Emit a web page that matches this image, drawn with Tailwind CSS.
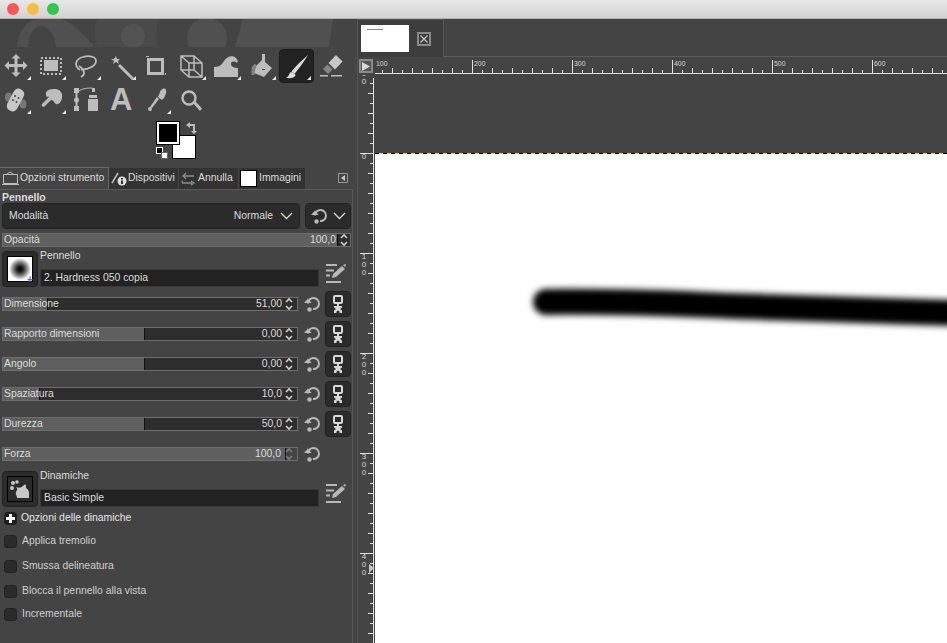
<!DOCTYPE html>
<html><head><meta charset="utf-8"><script src="https://cdn.jsdelivr.net/npm/@tailwindcss/browser@4"></script></head>
<body class="m-0 w-[947px] h-[643px] overflow-hidden bg-[#444444] font-['Liberation_Sans',sans-serif] text-[10.4px] text-[#dcdcdc]">
<svg class="hidden"><defs>
<g id="reset"><path d="M4 8.500a5.500 5.500 0 1 1 5 5.500" fill="none" stroke="#b8b8b8" stroke-width="2"/><path d="M0 8h7.500L4 3.500z" fill="#b8b8b8"/><circle cx="5.500" cy="14.500" r="2.200" fill="#b8b8b8"/></g>
<g id="link"><rect x="3" y="1" width="8" height="7" rx="1" fill="none" stroke="#d8d8d8" stroke-width="2"/><path d="M6 8h2v3H6zM3 11h8v1.500L9 14l2 1.500V18H8.500v-1.500L7 15.500l-1.500 1V18H3v-2.500L5 14l-2-1.500z" fill="#d8d8d8"/></g>
<g id="edit"><path d="M0 0h11v2H0zM0 5.500h8v2H0zM0 10.500h4v2H0zM0 17h15v2H0zM6 14l1-4L16 2l3 3-9 8z" fill="#b8b8b8"/><path d="M17 1l2-1 1 1-1 2z" fill="#b8b8b8"/></g>
<g id="spin"><path d="M2 5l3-3 3 3M2 9l3 3 3-3" fill="none" stroke="#d0d0d0" stroke-width="1.600"/></g>
</defs></svg>

<header class="h-[19px] flex items-center gap-[8px] pl-[7px] bg-gradient-to-b from-[#e8e8e8] to-[#d2d2d2] border-b border-[#b0b0b0]">
  <span class="w-3 h-3 rounded-full bg-[#fc5753]"></span><span class="w-3 h-3 rounded-full bg-[#fdbc40]"></span><span class="w-3 h-3 rounded-full bg-[#33c748]"></span>
</header>

<div class="flex h-[624px]">
  <aside class="w-[353px] shrink-0 flex flex-col relative">
    <svg class="h-[28px] w-[353px] block" viewBox="0 19 353 28"><path d="M17 47C18 31 28 19 38 19H62C75 25 86 37 93 45V47H56C55 37 50 26 41 26 33 26 28 37 28 47Z" fill="#505050"/><path d="M97 19H158C156 28 156 38 158 47H97C94 38 94 28 97 19Z" fill="#4a4a4a"/><circle cx="133" cy="36" r="12" fill="#525252"/><circle cx="207" cy="38" r="20" fill="#505050"/><path d="M243 19H333L329 47H235Z" fill="#505050"/></svg>

    <div class="h-[69px] relative">
      <div class="absolute left-[279px] top-[2px] w-[35px] h-[34px] rounded-[4px] bg-[#222222] border border-[#1a1a1a]"></div>
      <svg class="absolute left-0 top-0" width="353" height="69" viewBox="0 47 353 69" fill="#bdbdbd">
        <path d="M16 54l4.500 4.500h-3v5.500h5.500v-3l4.500 4.500-4.500 4.500v-3h-5.500v5.500h3l-4.500 4.500-4.500-4.500h3v-5.500H9v3l-4.500-4.500 4.500-4.500v3h5.500v-5.500h-3z"/>
        <path d="M44 60h14v11H44z"/><path d="M41 58h20v16H41z" fill="none" stroke="#bdbdbd" stroke-width="2" stroke-dasharray="2 2"/>
        <path d="M80 70C74 66 75 59 83 57 90 55 96 57 96 61 96 66 88 70 81 69.500M79 66c3 2 5 5 5 7 0 2-1 3-3 4" fill="none" stroke="#bdbdbd" stroke-width="1.800"/>
        <path d="M120 64l14 14-2 2-14-14z"/><path d="M116 56l1 3 3 0-2 2 1 3-3-2-3 2 1-3-3-2h3z"/>
        <path d="M147 58h17v17h-17zM150 61v11h11V61z" fill-rule="evenodd"/><path d="M146 56h3v1h-3zM165 73h1v2h-1z"/>
        <path d="M181 56h13l8 7v14h-13l-8-7zM181 56l8 7v14M189 63h13M181 70h13V56M194 70l8 7" fill="none" stroke="#bdbdbd" stroke-width="1.500"/>
        <path d="M214 77V67c6 0 8-3 10-6 3-5 9-6 12-3 2 2 2 4 1 5-2-2-6-2-6 1 0 3 4 4 7 4v9z"/>
        <path d="M256 66l6-6v10h3V62l7 6-8 9-10-4z"/><path d="M262 54h3v15h-3z"/><path d="M253 75v-5c0-3 1-4 3-5" fill="none" stroke="#858585" stroke-width="3"/>
        <path d="M308 55C302 60 296 66 291.500 71.500L294.500 74C299 68 304 62 308 55zM290 72.500C292 71.500 295 73 295.500 75 295 78 290 78.500 286 78 288 77 289 75 290 72.500z" fill="#dcdcdc"/>
        <path d="M336 55l6.500 6.500-7.500 8-6.500-6.500z" fill="#c8c8c8"/><path d="M327.500 64.500l5 5-4.500 4.500-5-5z" fill="#858585"/><path d="M320 75h8v1.500h-8zM331 75h11v1.500h-11z"/>
        <ellipse cx="8.500" cy="97" rx="3.500" ry="4.500" fill="#777"/><ellipse cx="23" cy="104" rx="3.500" ry="4.500" fill="#777"/>
        <rect x="10" y="88" width="11" height="24" rx="5" transform="rotate(28 15.500 100)" fill="#c8c8c8"/><g fill="#444"><circle cx="15" cy="96" r="1"/><circle cx="18.500" cy="98" r="1"/><circle cx="13" cy="100" r="1"/><circle cx="16.500" cy="102" r="1"/></g>
        <path d="M46 95C45 90 50 89 55 89 60 89 63 93 62 98 61 102 59 105 56 104 54 103 54 100 51 100L45 106C43 108 41 106 42 104L49 97C48 96 46 98 46 95z"/>
        <path d="M74 88h5v5h-5zM74 106h5v5h-5zM75.500 93h2v13h-2zM92 88h3v4h-3zM89 95h8v3h-8zM88 99h10v12H88z"/><circle cx="76.500" cy="100" r="2.500"/><path d="M79 91c3-2 6-3 13-3" fill="none" stroke="#bdbdbd" stroke-width="1"/>
        <path d="M160 92c1-3 5-5 6-2 1 2-1 6-2 8l-2 2-4-3z"/><path d="M157 97l2 2-7 9-2-1z"/><circle cx="150" cy="109" r="2"/>
        <circle cx="189" cy="98" r="6.500" fill="none" stroke="#bdbdbd" stroke-width="2.400"/><path d="M193 103l2-2 7 7.500-2 2.500z"/>
        <g fill="#e8e8e8"><path d="M31 80v-4l-4 4zM66 80v-4l-4 4zM101 80v-4l-4 4zM136 80v-4l-4 4zM206 80v-4l-4 4zM241 80v-4l-4 4zM276 80v-4l-4 4zM311 80v-4l-4 4zM31 114v-4l-4 4zM66 114v-4l-4 4zM171 114v-4l-4 4z"/></g>
      </svg>
      <span class="absolute left-[110px] top-[38px] font-bold text-[31px] leading-[30px] text-[#bdbdbd]">A</span>
    </div>

    <div class="h-[51px] relative">
      <div class="absolute left-[172px] top-[19px] w-[24px] h-[24px] bg-white border border-black"></div>
      <div class="absolute left-[156px] top-[5px] w-[24px] h-[24px] bg-black border border-black p-0"><div class="w-full h-full border-2 border-white bg-black"></div></div>
      <svg class="absolute left-[185px] top-[5px]" width="12" height="13" viewBox="0 0 12 13"><path d="M1 4l4-3v2h5v7h2l-3 3-3-3h2V5H5v2z" fill="#bdbdbd"/></svg>
      <div class="absolute left-[156px] top-[31px] w-[7px] h-[7px] bg-black border border-white"></div>
      <div class="absolute left-[161px] top-[36px] w-[7px] h-[7px] bg-white border border-[#666]"></div>
    </div>

    <nav class="h-[22px] flex items-end relative whitespace-nowrap">
      <div class="w-[109px] h-[22px] bg-[#444444] border-t border-r border-[#666] flex items-center gap-[1px] pl-[2px]"><svg class="shrink-0" width="17" height="16" viewBox="0 0 17 16"><path d="M1.500 3.500h14v9h-14zM0 13.500h17M5 3l3-2 3 2" fill="none" stroke="#bdbdbd"/></svg><span class="-mt-[2px]">Opzioni strumento</span></div>
      <div class="w-[69px] h-[21px] bg-[#333333] flex items-center gap-[1px] pl-[2px]"><svg class="shrink-0" width="16" height="16" viewBox="0 0 16 16"><path d="M1 12L7 2" stroke="#bdbdbd" stroke-width="1.500"/><circle cx="11" cy="10" r="4.500" fill="#e0e0e0"/><path d="M10 7h2v1.500h-2zM10 9.500h2V13h-2z" fill="#333"/></svg><span class="-mt-[2px]">Dispositivi</span></div>
      <div class="w-[59px] h-[21px] bg-[#333333] ml-px flex items-center gap-[2px] pl-[1px]"><svg class="shrink-0" width="16" height="16" viewBox="0 0 16 16"><path d="M14 5H4M6 2L3 5l3 3M2 12h10M2 9.500c0 1 0 2 1 2.500M11 14l3-2-3-2" fill="none" stroke="#8f8f8f" stroke-width="1.300"/></svg><span class="-mt-[2px]">Annulla</span></div>
      <div class="w-[66px] h-[21px] bg-[#333333] ml-px flex items-center gap-[2px] pl-[1px]"><div class="w-[17px] h-[17px] bg-white border border-black shrink-0"></div><span class="-mt-[2px]">Immagini</span></div>
      <svg class="absolute left-[338px] top-[6px]" width="10" height="10" viewBox="0 0 10 10"><path d="M.5.500h9v9h-9z" fill="none" stroke="#999"/><path d="M7 2v6L3 5z" fill="#c8c8c8"/></svg>
    </nav>

    <section class="flex-1 border-t border-r border-[#5a5a5a] w-[353px] relative pl-[2px] pr-[1px]">
      <h2 class="font-bold h-[13px] leading-[14px] text-[10.5px]">Pennello</h2>
      <div class="flex gap-[5px] h-[26px]">
        <div class="w-[298px] rounded-[4px] bg-[#2b2b2b] border border-[#222] flex items-center pl-[6px] pr-[6px]"><span class="flex-1 -mt-[1px]">Modalità</span><span class="-mt-[1px]">Normale</span><svg class="ml-[7px]" width="13" height="8" viewBox="0 0 13 8"><path d="M1 1l5.500 5.500L12 1" fill="none" stroke="#d8d8d8" stroke-width="1.300"/></svg></div>
        <div class="w-[46px] rounded-[4px] bg-[#2b2b2b] border border-[#222] flex items-center justify-center gap-[5px]"><svg width="17" height="17" viewBox="0 1 17 17"><use href="#reset"/></svg><svg width="13" height="8" viewBox="0 0 13 8"><path d="M1 1l5.500 5.500L12 1" fill="none" stroke="#d8d8d8" stroke-width="1.300"/></svg></div>
      </div>
      <div class="mt-[4px] w-[349px] h-[14px] border border-[#6e6e6e] bg-[#5f5f5f] flex items-center pl-[1px] leading-none"><span class="flex-1">Opacità</span><span class="pr-[1px]">100,0</span><span class="w-[13px] h-full bg-[#2e2e2e] border-l border-black flex items-center justify-center"><svg width="10" height="14" viewBox="0 0 10 14"><use href="#spin"/></svg></span></div>

      <div class="mt-[4px] flex h-[37px]">
        <div class="w-[36px] h-[36px] rounded-[4px] bg-[#2b2b2b] border border-[#222] flex items-center justify-center shrink-0 relative">
          <div class="w-[26px] h-[26px] border border-black bg-white bg-[radial-gradient(circle_at_center,#000_0,#222_3px,#888_7px,#fff_11px)]"></div>
          <span class="absolute left-[24px] top-[23px] text-[#5566ee] text-[10px] leading-none font-bold">+</span>
        </div>
        <div class="ml-[2px] w-[279px]">
          <p class="h-[15px] leading-[10px]">Pennello</p>
          <div class="h-[18px] mt-[3px] bg-[#222222] border border-[#383838] flex items-center pl-[3px]">2. Hardness 050 copia</div>
        </div>
        <svg class="ml-[7px] mt-[13px]" width="21" height="20" viewBox="0 0 21 20"><use href="#edit"/></svg>
      </div>

      <div class="mt-[3px] flex flex-col">
        <div class="flex items-center h-[26px]"><div class="w-[296px] h-[14px] border border-[#6e6e6e] bg-[linear-gradient(to_right,#5f5f5f_44px,#111_44px,#111_45px,#2d2d2d_45px)] flex items-center pl-[1px] leading-none"><span class="flex-1">Dimensione</span><span class="pr-[2px]">51,00</span><svg width="10" height="14" viewBox="0 0 10 14"><use href="#spin"/></svg><span class="w-[3px]"></span></div><svg class="ml-[6px]" width="17" height="17" viewBox="0 1 17 17"><use href="#reset"/></svg><div class="ml-[4px] w-[26px] h-[26px] rounded-[4px] bg-[#2b2b2b] border border-[#222] flex items-center justify-center"><svg width="14" height="19" viewBox="0 0 14 19"><use href="#link"/></svg></div></div>
        <div class="flex items-center h-[26px] mt-[4px]"><div class="w-[296px] h-[14px] border border-[#6e6e6e] bg-[linear-gradient(to_right,#5f5f5f_141px,#111_141px,#111_142px,#2d2d2d_142px)] flex items-center pl-[1px] leading-none"><span class="flex-1">Rapporto dimensioni</span><span class="pr-[2px]">0,00</span><svg width="10" height="14" viewBox="0 0 10 14"><use href="#spin"/></svg><span class="w-[3px]"></span></div><svg class="ml-[6px]" width="17" height="17" viewBox="0 1 17 17"><use href="#reset"/></svg><div class="ml-[4px] w-[26px] h-[26px] rounded-[4px] bg-[#2b2b2b] border border-[#222] flex items-center justify-center"><svg width="14" height="19" viewBox="0 0 14 19"><use href="#link"/></svg></div></div>
        <div class="flex items-center h-[26px] mt-[4px]"><div class="w-[296px] h-[14px] border border-[#6e6e6e] bg-[linear-gradient(to_right,#5f5f5f_141px,#111_141px,#111_142px,#2d2d2d_142px)] flex items-center pl-[1px] leading-none"><span class="flex-1">Angolo</span><span class="pr-[2px]">0,00</span><svg width="10" height="14" viewBox="0 0 10 14"><use href="#spin"/></svg><span class="w-[3px]"></span></div><svg class="ml-[6px]" width="17" height="17" viewBox="0 1 17 17"><use href="#reset"/></svg><div class="ml-[4px] w-[26px] h-[26px] rounded-[4px] bg-[#2b2b2b] border border-[#222] flex items-center justify-center"><svg width="14" height="19" viewBox="0 0 14 19"><use href="#link"/></svg></div></div>
        <div class="flex items-center h-[26px] mt-[4px]"><div class="w-[296px] h-[14px] border border-[#6e6e6e] bg-[linear-gradient(to_right,#5f5f5f_36px,#111_36px,#111_37px,#2d2d2d_37px)] flex items-center pl-[1px] leading-none"><span class="flex-1">Spaziatura</span><span class="pr-[2px]">10,0</span><svg width="10" height="14" viewBox="0 0 10 14"><use href="#spin"/></svg><span class="w-[3px]"></span></div><svg class="ml-[6px]" width="17" height="17" viewBox="0 1 17 17"><use href="#reset"/></svg><div class="ml-[4px] w-[26px] h-[26px] rounded-[4px] bg-[#2b2b2b] border border-[#222] flex items-center justify-center"><svg width="14" height="19" viewBox="0 0 14 19"><use href="#link"/></svg></div></div>
        <div class="flex items-center h-[26px] mt-[4px]"><div class="w-[296px] h-[14px] border border-[#6e6e6e] bg-[linear-gradient(to_right,#5f5f5f_141px,#111_141px,#111_142px,#2d2d2d_142px)] flex items-center pl-[1px] leading-none"><span class="flex-1">Durezza</span><span class="pr-[2px]">50,0</span><svg width="10" height="14" viewBox="0 0 10 14"><use href="#spin"/></svg><span class="w-[3px]"></span></div><svg class="ml-[6px]" width="17" height="17" viewBox="0 1 17 17"><use href="#reset"/></svg><div class="ml-[4px] w-[26px] h-[26px] rounded-[4px] bg-[#2b2b2b] border border-[#222] flex items-center justify-center"><svg width="14" height="19" viewBox="0 0 14 19"><use href="#link"/></svg></div></div>
        <div class="flex items-center h-[14px] mt-[10px]"><div class="w-[296px] h-[14px] border border-[#6e6e6e] bg-[linear-gradient(to_right,#5f5f5f_282px,#111_282px,#111_283px,#444_283px)] flex items-center pl-[1px] leading-none"><span class="flex-1">Forza</span><span class="pr-[3px]">100,0</span><svg class="opacity-40" width="10" height="14" viewBox="0 0 10 14"><use href="#spin"/></svg><span class="w-[3px]"></span></div><svg class="ml-[6px]" width="17" height="17" viewBox="0 1 17 17"><use href="#reset"/></svg></div>
      </div>

      <div class="mt-[10px] flex h-[37px]">
        <div class="w-[36px] h-[36px] rounded-[4px] bg-[#2b2b2b] border border-[#222] flex items-center justify-center shrink-0">
          <div class="w-[26px] h-[26px] border border-black">
            <svg width="24" height="24" viewBox="0 0 24 24" fill="#c8c8c8"><circle cx="5" cy="6" r="2"/><circle cx="9" cy="5" r="1.800"/><circle cx="4" cy="11" r="2"/><path d="M8 10c3 1 5 1 7-1 2-2 3-2 3 0v2c2 1 3 3 3 5v5H9c0-3-2-4-1-6s2-3 0-5z"/></svg>
          </div>
        </div>
        <div class="ml-[2px] w-[279px]">
          <p class="h-[15px] leading-[10px]">Dinamiche</p>
          <div class="h-[18px] mt-[3px] bg-[#222222] border border-[#383838] flex items-center pl-[3px]">Basic Simple</div>
        </div>
        <svg class="ml-[7px] mt-[13px]" width="21" height="20" viewBox="0 0 21 20"><use href="#edit"/></svg>
      </div>

      <div class="mt-[3px] h-[14px] flex items-center text-[#e4e4e4]"><span class="ml-[2px] w-[13px] h-[13px] rounded-[4px] bg-[#1e1e1e] flex items-center justify-center"><svg width="9" height="9" viewBox="0 0 9 9"><path d="M3 0h3v3h3v3H6v3H3V6H0V3h3z" fill="#fff"/></svg></span><span class="ml-[4px] -mt-[1px]">Opzioni delle dinamiche</span></div>
      <label class="mt-[10px] h-[13px] flex items-center text-[#cfcfcf]"><span class="ml-[2px] w-[13px] h-[13px] rounded-[3px] bg-[#2b2b2b] border border-[#222]"></span><span class="ml-[5px] -mt-[2px]">Applica tremolio</span></label>
      <label class="mt-[12px] h-[13px] flex items-center text-[#cfcfcf]"><span class="ml-[2px] w-[13px] h-[13px] rounded-[3px] bg-[#2b2b2b] border border-[#222]"></span><span class="ml-[5px] -mt-[2px]">Smussa delineatura</span></label>
      <label class="mt-[12px] h-[13px] flex items-center text-[#cfcfcf]"><span class="ml-[2px] w-[13px] h-[13px] rounded-[3px] bg-[#2b2b2b] border border-[#222]"></span><span class="ml-[5px] -mt-[2px]">Blocca il pennello alla vista</span></label>
      <label class="mt-[10px] h-[13px] flex items-center text-[#cfcfcf]"><span class="ml-[2px] w-[13px] h-[13px] rounded-[3px] bg-[#2b2b2b] border border-[#222]"></span><span class="ml-[5px] -mt-[2px]">Incrementale</span></label>
    </section>
  </aside>

  <div class="w-[4px] shrink-0 bg-[#444444]"></div>

  <main class="flex-1 min-w-0 flex flex-col border-l border-[#555] relative overflow-hidden">
    <div class="h-[38px] flex shrink-0 border-b border-[#5c5c5c] box-border">
      <div class="w-[86px] h-[38px] bg-[#3d3d3d] border-r border-t border-[#555] flex items-center pl-[3px] -mb-px">
        <div class="w-[48px] h-[27px] bg-white relative"><div class="absolute left-[6px] top-[4px] w-[16px] h-[1px] bg-[#888]"></div></div>
        <svg class="ml-[8px]" width="14" height="14" viewBox="0 0 14 14"><path d="M1 1h12v12H1z" fill="none" stroke="#8a8a8a" stroke-width="2"/><path d="M3.500 3.500l7 7M10.500 3.500l-7 7" stroke="#c8c8c8" stroke-width="1.200"/></svg>
      </div>
    </div>
    <div class="flex h-[18px] shrink-0">
      <div class="w-[17px] shrink-0 pl-[1px] pt-[2px]"><div class="w-[14px] h-[14px] border-2 border-[#8a8a8a] bg-[#555] flex items-center justify-center"><svg width="8" height="9" viewBox="0 0 8 9"><path d="M0 0l8 4.500L0 9z" fill="#d8d8d8"/></svg></div></div>
      <div class="flex-1 relative">
        <svg class="absolute inset-0" width="572" height="18" viewBox="375 57 572 18" font-family="Liberation Sans" font-size="8" fill="#d8d8d8">
          <path d="M375 73.500H947" stroke="#e0e0e0"/>
          <path stroke="#e0e0e0" d="M472.500 60V73M572.500 60V73M672.500 60V73M772.500 60V73M872.500 60V73
          M382.500 70V73M392.500 68V73M402.500 70V73M412.500 68V73M422.500 70V73M432.500 68V73M442.500 70V73M452.500 68V73M462.500 70V73
          M482.500 70V73M492.500 68V73M502.500 70V73M512.500 68V73M522.500 70V73M532.500 68V73M542.500 70V73M552.500 68V73M562.500 70V73
          M582.500 70V73M592.500 68V73M602.500 70V73M612.500 68V73M622.500 70V73M632.500 68V73M642.500 70V73M652.500 68V73M662.500 70V73
          M682.500 70V73M692.500 68V73M702.500 70V73M712.500 68V73M722.500 70V73M732.500 68V73M742.500 70V73M752.500 68V73M762.500 70V73
          M782.500 70V73M792.500 68V73M802.500 70V73M812.500 68V73M822.500 70V73M832.500 68V73M842.500 70V73M852.500 68V73M862.500 70V73
          M882.500 70V73M892.500 68V73M902.500 70V73M912.500 68V73M922.500 70V73M932.500 68V73M942.500 70V73"/>
          <text x="376" y="66" textLength="11.500" lengthAdjust="spacingAndGlyphs">100</text><text x="474" y="66" textLength="11.500" lengthAdjust="spacingAndGlyphs">200</text><text x="574" y="66" textLength="11.500" lengthAdjust="spacingAndGlyphs">300</text><text x="674" y="66" textLength="11.500" lengthAdjust="spacingAndGlyphs">400</text><text x="774" y="66" textLength="11.500" lengthAdjust="spacingAndGlyphs">500</text><text x="874" y="66" textLength="11.500" lengthAdjust="spacingAndGlyphs">600</text>
        </svg>
      </div>
    </div>
    <div class="flex-1 flex min-h-0 relative">
      <div class="w-[17px] shrink-0 relative overflow-hidden">
        <svg class="absolute inset-0" width="17" height="568" viewBox="358 75 17 568">
          <path d="M373.500 78V643" stroke="#e0e0e0"/>
          <path stroke="#e0e0e0" d="M360 153.500H373M360 253.500H373M360 353.500H373M360 453.500H373M360 553.500H373
          M370 83.500H373M368 93.500H373M370 103.500H373M368 113.500H373M370 123.500H373M368 133.500H373M370 143.500H373
          M370 163.500H373M368 173.500H373M370 183.500H373M368 193.500H373M370 203.500H373M368 213.500H373M370 223.500H373M368 233.500H373M370 243.500H373
          M370 263.500H373M368 273.500H373M370 283.500H373M368 293.500H373M370 303.500H373M368 313.500H373M370 323.500H373M368 333.500H373M370 343.500H373
          M370 363.500H373M368 373.500H373M370 383.500H373M368 393.500H373M370 403.500H373M368 413.500H373M370 423.500H373M368 433.500H373M370 443.500H373
          M370 463.500H373M368 473.500H373M370 483.500H373M368 493.500H373M370 503.500H373M368 513.500H373M370 523.500H373M368 533.500H373M370 543.500H373
          M370 563.500H373M368 573.500H373M370 583.500H373M368 593.500H373M370 603.500H373M368 613.500H373M370 623.500H373M368 633.500H373"/>
          <path d="M369 564l5 4-5 5z" fill="#c8c8c8"/>
        </svg>
        <div class="absolute left-[3px] top-[-5px] w-[6px] text-center text-[8px] leading-[8px] text-[#d8d8d8]">0<br>0</div>
        <div class="absolute left-[3px] top-[78px] w-[6px] text-center text-[8px] leading-[8px] text-[#d8d8d8]">0</div>
        <div class="absolute left-[3px] top-[178px] w-[6px] text-center text-[8px] leading-[8px] text-[#d8d8d8]">1<br>0<br>0</div>
        <div class="absolute left-[3px] top-[278px] w-[6px] text-center text-[8px] leading-[8px] text-[#d8d8d8]">2<br>0<br>0</div>
        <div class="absolute left-[3px] top-[378px] w-[6px] text-center text-[8px] leading-[8px] text-[#d8d8d8]">3<br>0<br>0</div>
        <div class="absolute left-[3px] top-[478px] w-[6px] text-center text-[8px] leading-[8px] text-[#d8d8d8]">4<br>0<br>0</div>
      </div>
      <div class="flex-1 relative">
        <div class="absolute left-0 right-0 top-[79px] bottom-0 bg-white"></div>
        <div class="absolute left-0 right-0 top-[78px] h-px bg-[repeating-linear-gradient(to_right,#000_0,#000_4px,#f0e040_4px,#f0e040_8px)]"></div>
        <svg class="absolute left-0 top-[78px]" width="572" height="490" viewBox="375 153 572 490"><path d="M546 302C620 301 680 304 733 306S880 311 960 313" fill="none" stroke="#000" stroke-width="26" stroke-linecap="round" class="blur-[3px]"/></svg>
      </div>
    </div>
  </main>
</div>
</body></html>
